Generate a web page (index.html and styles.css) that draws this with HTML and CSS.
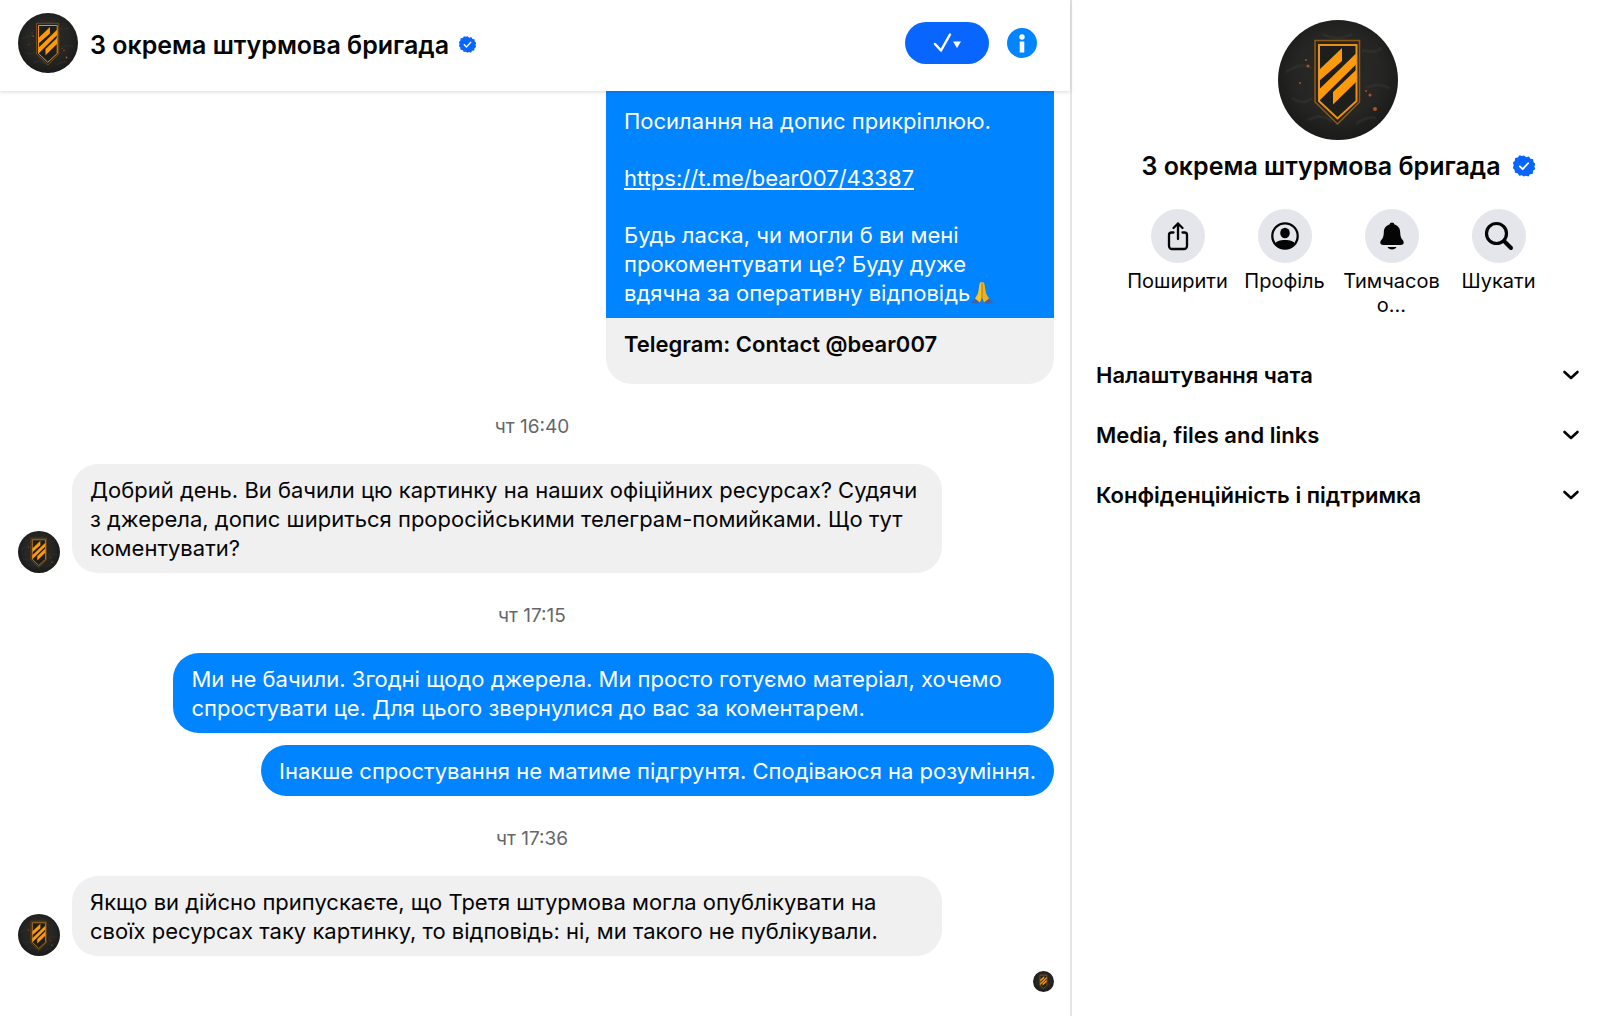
FILE: index.html
```html
<!DOCTYPE html>
<html lang="uk">
<head>
    <meta charset="UTF-8">
    <meta name="viewport" content="width=device-width, initial-scale=1.0">
    <title>3 окрема штурмова бригада</title>
    <link rel="stylesheet" href="styles.css">
</head>
<body>
    <!-- Shared icons -->
    <svg class="sprite" aria-hidden="true">
        <defs>
            <radialGradient id="smoke" cx="50%" cy="45%" r="60%">
                <stop offset="0" stop-color="#2a2a27"/>
                <stop offset="0.6" stop-color="#252523"/>
                <stop offset="1" stop-color="#171817"/>
            </radialGradient>
        </defs>
        <symbol id="logo" viewBox="0 0 120 120">
            <circle cx="60" cy="60" r="60" fill="url(#smoke)"/>
            <g fill="none" stroke="#3d3d3a" stroke-width="3" opacity="0.35">
                <path d="M8 52q14-10 26-4M14 78q12 8 20 0M84 30q12 4 20-2M88 68q12-6 24 0M30 100q14-8 24 2M78 104q10-8 20-6M44 14q16 8 30 0"/>
            </g>
            <path d="M37 20.500h44.500v61.500L59.500 104 37 82z" fill="none" stroke="#8f5a17" stroke-width="1.500"/>
            <path d="M41 25h37.500v56L59.500 98.500 41 81z" fill="#1e1e1d" stroke="#e8901a" stroke-width="2"/>
            <g fill="#fd9a0c">
                <path d="M41 50L64 28v13L41 61z"/>
                <path d="M41 69.500L78 33.500v11L41 81z"/>
                <path d="M55 72L78 50v12L55 84.500z"/>
            </g>
            <g fill="#b4511c">
                <circle cx="28" cy="40" r="1"/>
                <circle cx="30" cy="46" r="1.500"/>
                <circle cx="22" cy="63" r="1"/>
                <circle cx="88" cy="71" r="1"/>
                <circle cx="92" cy="75" r="1.500"/>
                <circle cx="97" cy="89" r="2"/>
            </g>
        </symbol>
        <symbol id="verified" viewBox="0 0 24 24">
            <path d="M12 0.500l2.400 1.900 2.900-0.900 1.700 2.600 3 0.400 0.300 3.100 2.200 2.100-1.200 2.800 1 2.900-2.400 1.900-0.300 3.100-3.100 0.500-1.600 2.600-2.900-0.900L12 23.500l-2.400-1.400-2.900 0.400-1.600-2.600-3-0.500-0.300-3.100-2-2.200 1-2.800-1-2.800 2.200-2.100 0.300-3.100 3-0.500 1.700-2.500 2.900 0.800z" fill="#0866ff"/>
            <path d="M7.500 12.500l3 3 6-6.500" fill="none" stroke="#fff" stroke-width="2" stroke-linecap="round" stroke-linejoin="round"/>
        </symbol>
        <symbol id="chevron" viewBox="0 0 18 12">
            <path d="M2.500 3L9 9l6.500-6" fill="none" stroke="#050505" stroke-width="2.600" stroke-linecap="round" stroke-linejoin="round"/>
        </symbol>
    </svg>

    <div class="app">
        <main class="chat">
            <header class="chat-header">
                <svg class="avatar-lg"><use href="#logo"/></svg>
                <div class="chat-title">
                    <h1 class="name">3 окрема штурмова бригада</h1>
                    <svg class="verified-sm"><use href="#verified"/></svg>
                </div>
                <div class="header-actions">
                    <button class="mark-btn" aria-label="Позначити">
                        <svg width="30" height="22" viewBox="0 0 30 22">
                            <path d="M3 12l6 6.500L18 2.500" fill="none" stroke="#fff" stroke-width="2.500" stroke-linecap="round" stroke-linejoin="round"/>
                            <path d="M21 9.500h8l-4 6.500z" fill="#fff"/>
                        </svg>
                    </button>
                    <button class="info-btn" aria-label="Інформація">
                        <svg width="30" height="30" viewBox="0 0 30 30">
                            <circle cx="15" cy="15" r="15" fill="#0084ff"/>
                            <circle cx="15" cy="9" r="2.700" fill="#fff"/>
                            <path d="M12.700 13.500h4.600V24.500h-4.600z" fill="#fff"/>
                        </svg>
                    </button>
                </div>
            </header>

            <div class="messages">
                <div class="row out">
                    <div class="card">
                        <div class="card-text">
                            <p>Посилання на допис прикріплюю.</p>
                            <p><a href="https://t.me/bear007/43387">https://t.me/bear007/43387</a></p>
                            <p>Будь ласка, чи могли б ви мені прокоментувати це? Буду дуже вдячна за оперативну відповідь<svg class="emoji" role="img" aria-label="Дякую" viewBox="0 0 24 24">
                                <path d="M0.500 21.500l5.500-4.500 5 4.500-5 1.500zM23.500 21.500l-5.500-4.500-5 4.500 5 1.500z" fill="#3f63ad"/>
                                <path d="M11.800 1c-1.800 0-2.300 1.500-2.600 4L8 12.500 5 17.500l5 4 1.800-5z" fill="#ffc21a"/>
                                <path d="M12.200 1c1.800 0 2.300 1.500 2.600 4L16 12.500l3 5-5 4-1.800-5z" fill="#f7b010"/>
                                <path d="M12 3v14" stroke="#c77d0a" stroke-width="0.800"/>
                            </svg></p>
                        </div>
                        <div class="card-title">Telegram: Contact @bear007</div>
                    </div>
                </div>

                <time class="stamp">чт 16:40</time>

                <div class="row">
                    <svg class="avatar-md"><use href="#logo"/></svg>
                    <p class="bubble grey">Добрий день. Ви бачили цю картинку на наших офіційних ресурсах? Судячи з джерела, допис шириться проросійськими телеграм-помийками. Що тут коментувати?</p>
                </div>

                <time class="stamp">чт 17:15</time>

                <div class="row out">
                    <p class="bubble blue">Ми не бачили. Згодні щодо джерела. Ми просто готуємо матеріал, хочемо спростувати це. Для цього звернулися до вас за коментарем.</p>
                </div>
                <div class="row out">
                    <p class="bubble blue">Інакше спростування не матиме підгрунтя. Сподіваюся на розуміння.</p>
                </div>

                <time class="stamp">чт 17:36</time>

                <div class="row">
                    <svg class="avatar-md"><use href="#logo"/></svg>
                    <p class="bubble grey">Якщо ви дійсно припускаєте, що Третя штурмова могла опублікувати на своїх ресурсах таку картинку, то відповідь: ні, ми такого не публікували.</p>
                </div>

                <svg class="seen"><use href="#logo"/></svg>
            </div>
        </main>

        <aside class="sidebar">
            <svg class="avatar-xl"><use href="#logo"/></svg>
            <div class="profile-name">
                <h2 class="name">3 окрема штурмова бригада</h2>
                <svg class="verified-md"><use href="#verified"/></svg>
            </div>

            <div class="actions">
                <button class="action">
                    <span class="action-icon">
                        <svg width="30" height="30" viewBox="0 0 30 30" fill="none" stroke="#050505" stroke-width="2.300" stroke-linecap="round" stroke-linejoin="round">
                            <path d="M10.500 11.500H8.500a2.500 2.500 0 0 0-2.500 2.500v11a3 3 0 0 0 3 3h12a3 3 0 0 0 3-3V14a2.500 2.500 0 0 0-2.500-2.500H19.500"/>
                            <path d="M15 18V2.500M10.500 7L15 2.500 19.500 7"/>
                        </svg>
                    </span>
                    <span class="action-label">Поширити</span>
                </button>
                <button class="action">
                    <span class="action-icon">
                        <svg width="30" height="30" viewBox="0 0 30 30">
                            <circle cx="15" cy="15" r="12.700" fill="none" stroke="#050505" stroke-width="2.300"/>
                            <ellipse cx="15" cy="12" rx="4.800" ry="5.300" fill="#050505"/>
                            <path d="M5 23c1-3 5-4 10-4s9 1 10 4c-2.500 3-6 5-10 5s-7.500-2-10-5z" fill="#050505"/>
                        </svg>
                    </span>
                    <span class="action-label">Профіль</span>
                </button>
                <button class="action">
                    <span class="action-icon">
                        <svg width="30" height="30" viewBox="0 0 30 30" fill="#050505">
                            <path d="M15 1.500c1.300 0 2.200 0.700 2.500 2 3.800 1 5.700 4.300 5.700 8 0 3.500 0.800 5.500 2.300 7.300 0.900 1.200 1.400 2.200 1.200 3.200-0.300 1.300-1.300 2-2.900 2H6.200c-1.600 0-2.600-0.700-2.900-2-0.200-1 0.300-2 1.200-3.200 1.500-1.800 2.300-3.800 2.300-7.300 0-3.700 1.900-7 5.700-8 0.300-1.300 1.200-2 2.500-2z"/>
                            <path d="M10.500 26h9c-0.500 1.500-2.500 2.500-4.500 2.500s-4-1-4.500-2.500z"/>
                        </svg>
                    </span>
                    <span class="action-label">Тимчасов<br>о...</span>
                </button>
                <button class="action">
                    <span class="action-icon">
                        <svg width="30" height="30" viewBox="0 0 30 30" fill="none" stroke="#050505" stroke-linecap="round">
                            <circle cx="12.500" cy="12.500" r="10" stroke-width="3.200"/>
                            <path d="M20.500 20.500L27 27" stroke-width="4"/>
                        </svg>
                    </span>
                    <span class="action-label">Шукати</span>
                </button>
            </div>

            <div class="sections">
                <button class="section-btn">Налаштування чата <svg class="chevron"><use href="#chevron"/></svg></button>
                <button class="section-btn">Media, files and links <svg class="chevron"><use href="#chevron"/></svg></button>
                <button class="section-btn">Конфіденційність і підтримка <svg class="chevron"><use href="#chevron"/></svg></button>
            </div>
        </aside>
    </div>
</body>
</html>
```
FILE: styles.css
```css
* {
    margin: 0;
    padding: 0;
    box-sizing: border-box;
}
body {
    font-family: Inter, "Liberation Sans", sans-serif;
    font-size: 22px;
    line-height: 29px;
    background-color: #fff;
    color: #050505;
}
button {
    border: none;
    background: none;
    font: inherit;
    color: inherit;
    cursor: pointer;
}
svg {
    display: block;
    flex-shrink: 0;
}
.sprite {
    position: absolute;
    width: 0;
    height: 0;
}
.app {
    display: flex;
    height: 100vh;
}
.name {
    font-size: 25px;
    font-weight: 600;
    line-height: 32px;
}

/* Chat */
.chat {
    flex: 1;
    min-width: 0;
    display: flex;
    flex-direction: column;
}
.chat-header {
    display: flex;
    align-items: center;
    height: 91px;
    padding: 0 33px 5px 18px;
    box-shadow: 0 1px 4px rgba(0,0,0,0.15);
    z-index: 1;
}
.avatar-lg {
    width: 60px;
    height: 60px;
    margin-right: 12px;
}
.chat-title {
    display: flex;
    align-items: center;
    gap: 10px;
    padding-top: 3px;
}
.verified-sm {
    width: 17px;
    height: 17px;
}
.header-actions {
    display: flex;
    align-items: center;
    gap: 18px;
    margin-left: auto;
}
.mark-btn {
    display: flex;
    align-items: center;
    justify-content: center;
    width: 84px;
    height: 42px;
    border-radius: 21px;
    background-color: #0866ff;
}
.messages {
    flex: 1;
    min-height: 0;
    display: flex;
    flex-direction: column;
    justify-content: flex-end;
    overflow: hidden;
    padding: 0 16px 24px 10px;
}
.row {
    display: flex;
    align-items: flex-end;
    gap: 12px;
    padding-left: 8px;
}
.row.out {
    justify-content: flex-end;
}
.row.out + .row.out {
    margin-top: 12px;
}
.avatar-md {
    width: 42px;
    height: 42px;
}
.bubble {
    max-width: 84%;
    padding: 12px 18px 10px;
    border-radius: 26px;
}
.bubble.grey {
    background-color: #f0f0f0;
}
.bubble.blue {
    max-width: 85%;
    background-color: #0084ff;
    color: #fff;
}
.card {
    width: 448px;
    border-radius: 26px;
    overflow: hidden;
    background-color: #f0f0f0;
}
.card-text {
    padding: 40px 18px 10px;
    background-color: #0084ff;
    color: #fff;
}
.card-text p + p {
    margin-top: 28px;
}
.card-text a {
    color: inherit;
}
.emoji {
    display: inline-block;
    width: 24px;
    height: 24px;
    vertical-align: -4px;
}
.card-title {
    padding: 12px 18px 25px;
    font-weight: 600;
}
.stamp {
    padding: 32px 0 26px;
    font-size: 19px;
    line-height: 22px;
    text-align: center;
    color: #65676b;
}
.seen {
    align-self: flex-end;
    width: 21px;
    height: 21px;
    margin-top: 15px;
}

/* Sidebar */
.sidebar {
    display: flex;
    flex-direction: column;
    align-items: center;
    width: 530px;
    padding: 20px 20px 0 24px;
    border-left: 2px solid #e5e5e5;
}
.avatar-xl {
    width: 120px;
    height: 120px;
}
.profile-name {
    display: flex;
    align-items: center;
    gap: 12px;
    margin-top: 10px;
}
.verified-md {
    width: 22px;
    height: 22px;
}
.actions {
    display: flex;
    margin-top: 27px;
}
.action {
    display: flex;
    flex-direction: column;
    align-items: center;
    width: 107px;
}
.action-icon {
    display: flex;
    align-items: center;
    justify-content: center;
    width: 54px;
    height: 54px;
    border-radius: 50%;
    background-color: #e4e6eb;
}
.action-label {
    margin-top: 6px;
    font-size: 20px;
    line-height: 24px;
}
.sections {
    align-self: stretch;
    padding-top: 28px;
}
.section-btn {
    display: flex;
    align-items: center;
    justify-content: space-between;
    width: 100%;
    height: 60px;
    font-weight: 600;
    text-align: left;
}
.chevron {
    width: 18px;
    height: 12px;
}
```
